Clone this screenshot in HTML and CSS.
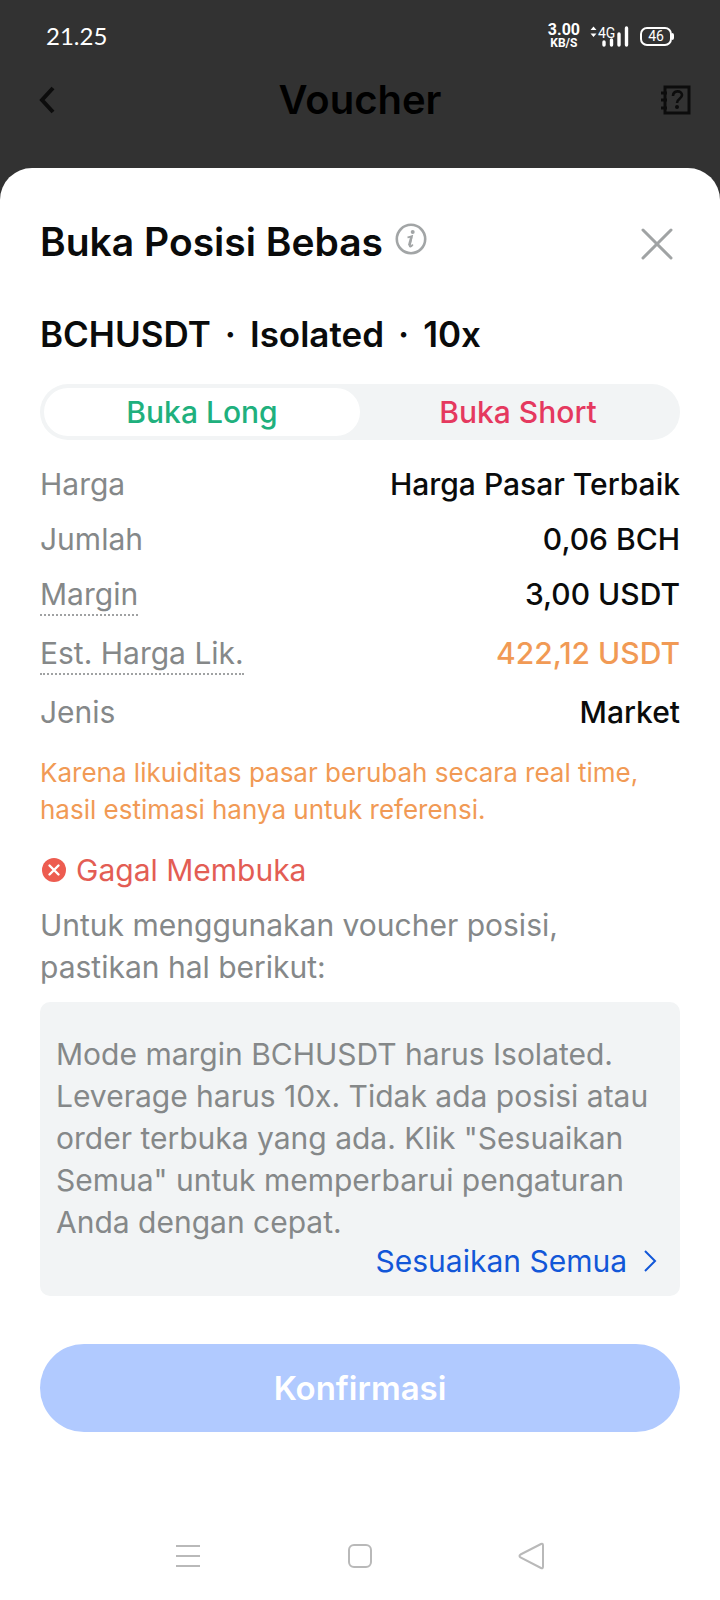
FILE: index.html
```html
<!DOCTYPE html>
<html lang="id">
<head>
<meta charset="utf-8">
<meta name="viewport" content="width=device-width, initial-scale=1">
<title>Voucher</title>
<link rel="stylesheet" href="styles.css">
</head>
<body>
<div class="screen">
  <div class="status">
    <time class="clock">21.25</time>
    <div class="indicators">
      <div class="speed"><span class="speed-value">3.00</span><span class="speed-unit">KB/S</span></div>
      <svg class="signal" width="40" height="24" viewBox="0 0 40 24" role="img" aria-label="4G">
        <path d="M0.500 6 3.500 2.500l3 3.500zM0.500 9.500h6l-3 3.500z" fill="#fff"/>
        <text x="8" y="14" class="signal-text">4G</text>
        <path d="M14 18v3M21.500 16v5M29 10v11M36.500 4v17" stroke="#fff" stroke-width="3.400" stroke-linecap="round"/>
      </svg>
      <div class="battery">46</div>
    </div>
  </div>
  <header class="appbar">
    <button class="icon-button back" aria-label="Kembali">
      <svg width="18" height="28" viewBox="0 0 18 28"><path d="M15 2 4 14l11 12" fill="none" stroke="#0c0c0c" stroke-width="4"/></svg>
    </button>
    <h1 class="appbar-title">Voucher</h1>
    <button class="icon-button end" aria-label="Bantuan">
      <svg width="32" height="30" viewBox="0 0 32 30">
        <path d="M5 2h24v26H5z" fill="none" stroke="#0c0c0c" stroke-width="3"/>
        <path d="M1 8h6M1 15h6M1 23h6" stroke="#0c0c0c" stroke-width="3"/>
        <path d="M13 11c0-6 9-6 9-1 0 4-5 3.500-5 8" fill="none" stroke="#0c0c0c" stroke-width="2.600"/>
        <circle cx="17" cy="22" r="2" fill="#0c0c0c"/>
      </svg>
    </button>
  </header>
  <main class="sheet">
    <div class="sheet-head">
      <h2 class="sheet-title">Buka Posisi Bebas</h2>
      <button class="icon-button info" aria-label="Info">
        <svg width="32" height="32" viewBox="0 0 32 32">
          <circle cx="16" cy="16" r="14.200" fill="none" stroke="#a2a5a6" stroke-width="2.600"/>
          <circle cx="17.700" cy="9" r="2" fill="#a2a5a6"/>
          <path d="M12.500 14.300c2-.3 3-.8 4.500-1.200l-2.200 9.200c-.5 2 1.300 1.600 3-.8" fill="none" stroke="#a2a5a6" stroke-width="1.800"/>
          <path d="m16.300 14-2.200 8.500" stroke="#a2a5a6" stroke-width="2.400"/>
        </svg>
      </button>
      <button class="icon-button close" aria-label="Tutup">
        <svg width="32" height="32" viewBox="0 0 32 32"><path d="m2 2 28 28M30 2 2 30" stroke="#a0a3a4" stroke-width="3" stroke-linecap="round"/></svg>
      </button>
    </div>
    <h3 class="pair"><span>BCHUSDT</span><span>·</span><span>Isolated</span><span>·</span><span>10x</span></h3>
    <div class="tabs" role="tablist">
      <button class="tab long" role="tab" aria-selected="true">Buka Long</button>
      <button class="tab short" role="tab" aria-selected="false">Buka Short</button>
    </div>
    <dl class="details">
      <div class="row"><dt>Harga</dt><dd>Harga Pasar Terbaik</dd></div>
      <div class="row"><dt>Jumlah</dt><dd>0,06 BCH</dd></div>
      <div class="row"><dt class="hint">Margin</dt><dd>3,00 USDT</dd></div>
      <div class="row"><dt class="hint">Est. Harga Lik.</dt><dd class="warn">422,12 USDT</dd></div>
      <div class="row"><dt>Jenis</dt><dd>Market</dd></div>
    </dl>
    <p class="note">Karena likuiditas pasar berubah secara real time, hasil estimasi hanya untuk referensi.</p>
    <div class="failure">
      <svg width="26" height="26" viewBox="0 0 26 26"><circle cx="14" cy="13" r="12" fill="#ed5c50"/><path d="m9.500 8.500 9 9M18.500 8.500l-9 9" stroke="#fff" stroke-width="2.400" stroke-linecap="round"/></svg>
      <span>Gagal Membuka</span>
    </div>
    <p class="lead">Untuk menggunakan voucher posisi,<br>pastikan hal berikut:</p>
    <section class="panel">
      <p class="panel-text">Mode margin BCHUSDT harus Isolated. Leverage harus 10x. Tidak ada posisi atau order terbuka yang ada. Klik "Sesuaikan Semua" untuk memperbarui pengaturan Anda dengan cepat.</p>
      <a class="panel-link" href="#">Sesuaikan Semua
        <svg width="14" height="22" viewBox="0 0 14 22"><path d="m2 1 10 10L2 21" fill="none" stroke="#1257d8" stroke-width="2"/></svg>
      </a>
    </section>
    <button class="confirm" disabled>Konfirmasi</button>
    <nav class="system-nav">
      <button class="icon-button" aria-label="Aplikasi terbaru"><svg width="28" height="28" viewBox="0 0 28 28"><path d="M2 4h24M2 14h24M2 24h24" stroke="#b9b9b9" stroke-width="2"/></svg></button>
      <button class="icon-button" aria-label="Beranda"><svg width="28" height="28" viewBox="0 0 28 28"><rect x="3" y="3" width="22" height="22" rx="5" fill="none" stroke="#b9b9b9" stroke-width="2"/></svg></button>
      <button class="icon-button" aria-label="Kembali"><svg width="28" height="28" viewBox="0 0 28 28"><path d="M2.500 12.500 23 2q2-1 2 1.500v21q0 2.500-2 1.500L2.500 15.500q-2-1.500 0-3z" fill="none" stroke="#b9b9b9" stroke-width="2"/></svg></button>
    </nav>
  </main>
</div>
</body>
</html>
```
FILE: styles.css
```css
* { box-sizing: border-box; }

body {
  margin: 0;
  background: #323232;
  color: #0a0b0b;
  font-family: Inter, "Liberation Sans", sans-serif;
  font-size: 30px;
  line-height: 40px;
}

h1, h2, h3, p, dl, dd { margin: 0; }

button { font: inherit; border: 0; padding: 0; background: none; }

svg { display: block; flex: none; }

.screen {
  display: flex;
  flex-direction: column;
  min-height: 100vh;
}

.status {
  display: flex;
  justify-content: space-between;
  align-items: center;
  height: 72px;
  padding: 0 48px 0 46px;
  color: #fff;
}

.clock {
  font-family: Lato, sans-serif;
  font-size: 24px;
}

.indicators {
  display: flex;
  align-items: center;
  gap: 10px;
}

.speed {
  display: flex;
  flex-direction: column;
  align-items: center;
  font-family: Roboto, sans-serif;
  font-weight: 700;
}

.speed-value {
  font-size: 16px;
  line-height: 14px;
}

.speed-unit {
  font-size: 12px;
  line-height: 12px;
}

.signal-text {
  font: 14px Roboto, sans-serif;
  fill: #fff;
}

.battery {
  position: relative;
  width: 32px;
  height: 19px;
  border: 2px solid #fff;
  border-radius: 7px;
  font: 14px/15px Roboto, sans-serif;
  text-align: center;
}

.battery::after {
  content: "";
  position: absolute;
  right: -4px;
  top: 4px;
  width: 2px;
  height: 7px;
  border-radius: 0 2px 2px 0;
  background: #fff;
}

.appbar {
  display: grid;
  grid-template-columns: 1fr auto 1fr;
  align-items: center;
  height: 56px;
  margin-bottom: 40px;
  padding: 0 28px;
}

.appbar-title {
  color: #000;
  font-size: 40px;
  font-weight: 600;
}

.icon-button.back { margin-left: 10px; justify-self: start; }
.icon-button.end { justify-self: end; }

.sheet {
  flex: 1;
  display: flex;
  flex-direction: column;
  padding: 48px 40px 0;
  border-radius: 32px 32px 0 0;
  background: #fff;
}

.sheet-head {
  display: flex;
  align-items: center;
  height: 52px;
}

.sheet-title {
  font-size: 39px;
  font-weight: 600;
}

.info { margin: 0 0 6px 12px; }

.close { margin: 4px 7px 0 auto; }

.pair {
  display: flex;
  gap: 14px;
  margin: 46px 0 30px;
  font-size: 35px;
  font-weight: 600;
}

.tabs {
  display: flex;
  height: 56px;
  padding: 4px;
  border-radius: 28px;
  background: #f2f4f5;
}

.tab {
  flex: 1;
  border-radius: 24px;
  font-weight: 500;
}

.tab[aria-selected="true"] { background: #fff; }

.long { color: #20b07d; }
.short { color: #e5395f; }

.details {
  display: flex;
  flex-direction: column;
  gap: 15px;
  margin-top: 24px;
}

.row {
  display: flex;
  justify-content: space-between;
  align-items: flex-start;
}

dt { color: #858889; }

dd { font-weight: 500; }

.hint {
  margin-bottom: 2px;
  border-bottom: 2px dotted #a0a2a3;
}

.warn { color: #f19a55; }

.note {
  margin-top: 22px;
  color: #f19a55;
  font-size: 26px;
  line-height: 37px;
}

.failure {
  display: flex;
  align-items: center;
  gap: 10px;
  margin: 22px 0 14px;
  color: #e35d54;
}

.lead,
.panel-text {
  color: #858889;
  line-height: 42px;
}

.panel {
  display: flex;
  flex-direction: column;
  margin-top: 14px;
  padding: 31px 16px 17px;
  border-radius: 10px;
  background: #f2f4f5;
}

.panel-link {
  display: flex;
  align-items: center;
  align-self: flex-end;
  gap: 16px;
  margin-right: 7px;
  color: #1257d8;
  line-height: 36px;
  text-decoration: none;
}

.confirm {
  flex: none;
  height: 88px;
  margin-top: 48px;
  border-radius: 44px;
  background: #b1caff;
  color: #fff;
  font-size: 33px;
  font-weight: 600;
}

.system-nav {
  display: flex;
  justify-content: space-between;
  margin: auto 0 30px;
  padding: 0 134px;
}
```
